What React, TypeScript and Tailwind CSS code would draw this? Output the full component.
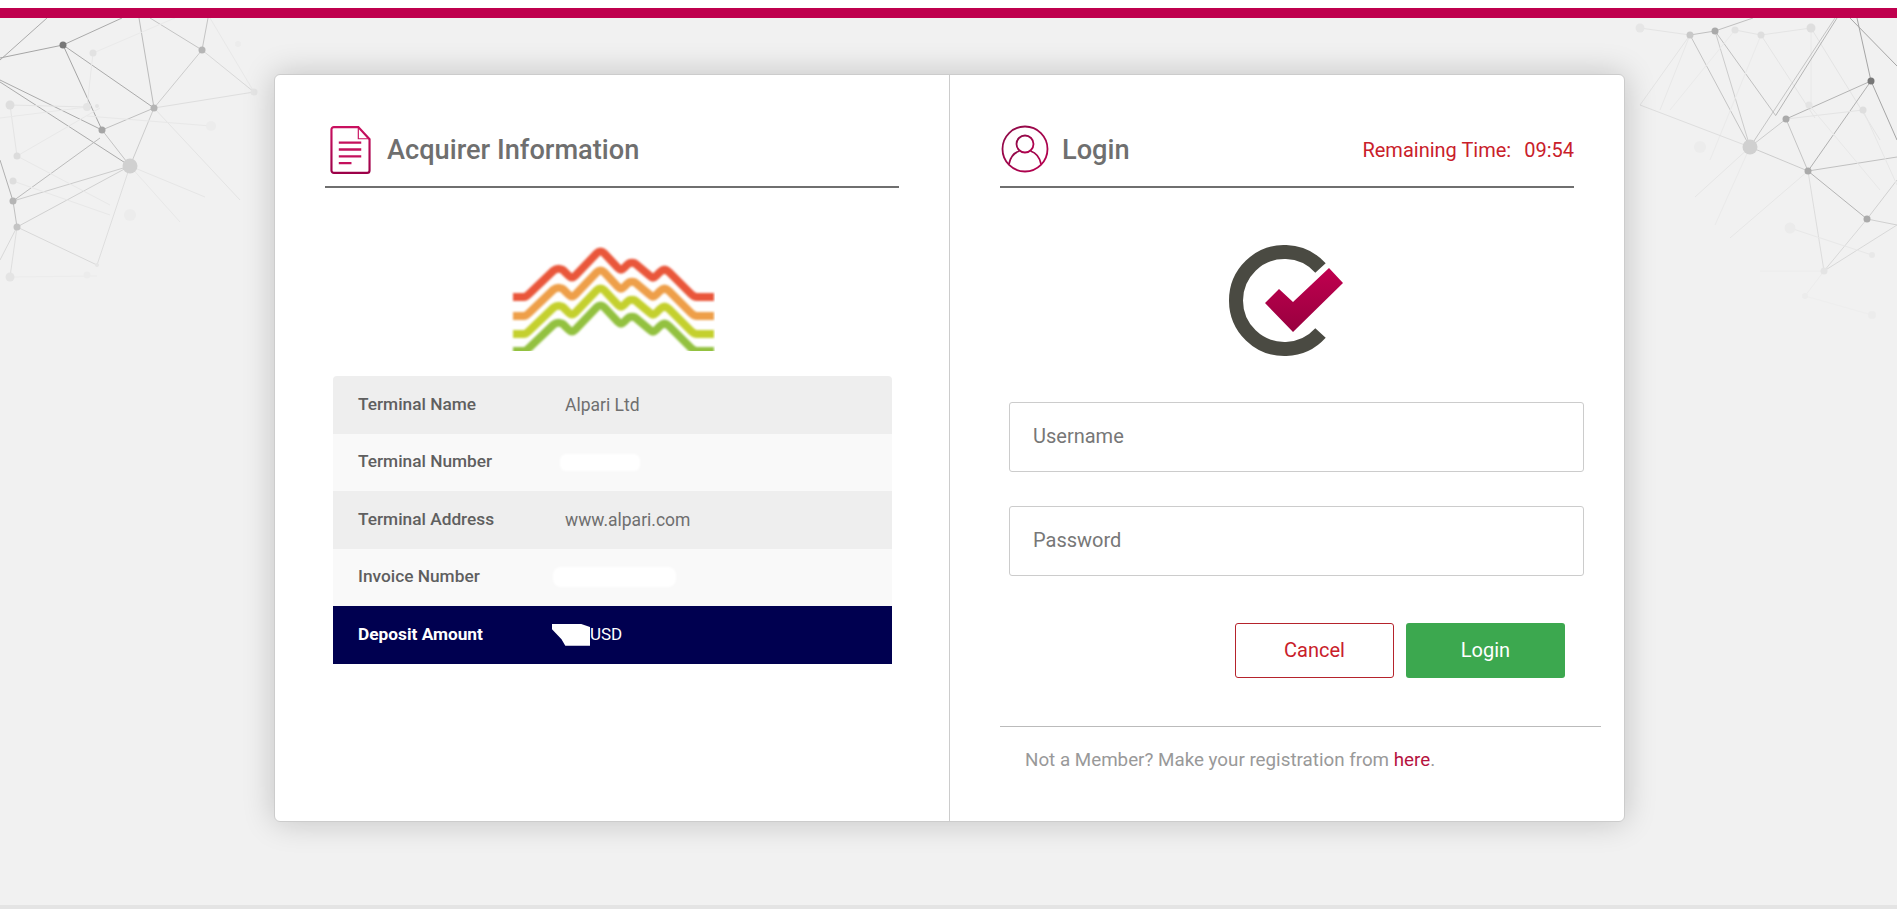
const leftNodes: [number, number, number, string][] = [
  [63, 45, 3.5, "#777"], [93, 53, 3.5, "#e2e2e2"], [202, 50, 3.5, "#b5b5b5"], [254, 92, 3.5, "#e6e6e6"],
  [238, 44, 3, "#ececec"], [154, 108, 3.5, "#b5b5b5"], [102, 130, 3.5, "#a5a5a5"], [10, 105, 4.5, "#dedede"],
  [87, 107, 4, "#e4e4e4"], [97, 106, 2, "#e4e4e4"], [211, 126, 5, "#ececec"], [130, 166, 7.5, "#d0d0d0"],
  [17, 156, 3.5, "#dcdcdc"], [13, 181, 3.5, "#dedede"], [13, 201, 3.5, "#b5b5b5"], [17, 227, 3.5, "#c4c4c4"],
  [130, 215, 6, "#ececec"], [10, 277, 4.5, "#e4e4e4"], [87, 275, 3.5, "#ececec"], [97, 265, 2, "#e6e6e6"],
];
const leftEdges: [number, number, number, number, string][] = [
  [0, 58, 63, 45, "#a5a5a5"], [0, 60, 47, 18, "#aaa"], [63, 45, 122, 18, "#aaa"], [63, 45, 102, 130, "#a5a5a5"],
  [63, 45, 154, 108, "#aaa"], [139, 18, 154, 108, "#bbb"], [150, 18, 202, 50, "#c4c4c4"], [202, 50, 154, 108, "#ccc"],
  [208, 18, 202, 50, "#c4c4c4"], [202, 50, 254, 92, "#d8d8d8"], [210, 18, 254, 92, "#e8e8e8"], [154, 108, 102, 130, "#c0c0c0"],
  [154, 108, 130, 166, "#ccc"], [154, 108, 254, 92, "#dedede"], [154, 108, 240, 200, "#e4e4e4"], [102, 130, 130, 166, "#c4c4c4"],
  [0, 80, 102, 130, "#aaa"], [0, 82, 130, 166, "#aaa"], [100, 138, 13, 201, "#bbb"], [130, 166, 13, 201, "#ccc"],
  [130, 166, 17, 227, "#d0d0d0"], [130, 166, 97, 265, "#dedede"], [130, 166, 205, 197, "#e6e6e6"], [130, 166, 180, 222, "#e8e8e8"],
  [13, 201, 17, 227, "#c0c0c0"], [0, 160, 13, 201, "#b0b0b0"], [17, 227, 97, 265, "#d8d8d8"], [17, 227, 10, 277, "#dedede"],
  [17, 227, 0, 260, "#d8d8d8"], [10, 105, 87, 107, "#e4e4e4"], [10, 105, 17, 156, "#e4e4e4"], [93, 53, 87, 107, "#e8e8e8"],
  [17, 156, 100, 108, "#e8e8e8"], [17, 156, 110, 205, "#e8e8e8"], [13, 181, 110, 215, "#e8e8e8"], [0, 118, 87, 107, "#e8e8e8"],
  [87, 116, 211, 126, "#e8e8e8"], [10, 277, 97, 276, "#ececec"], [93, 53, 175, 18, "#eaeaea"],
];
const rightNodes: [number, number, number, string][] = [
  [1640, 28, 4.5, "#e6e6e6"], [1690, 35, 3.5, "#c8c8c8"], [1715, 31, 3.5, "#aaa"], [1735, 30, 3.5, "#e2e2e2"],
  [1761, 35, 3.5, "#dedede"], [1811, 28, 4.5, "#dedede"], [1809, 105, 3.5, "#e4e4e4"], [1863, 110, 3.5, "#dedede"],
  [1786, 119, 3.5, "#aaa"], [1871, 81, 3.5, "#777"], [1808, 171, 3.5, "#aaa"], [1750, 147, 7.5, "#d0d0d0"],
  [1867, 219, 3.5, "#aaa"], [1700, 147, 6, "#ececec"], [1790, 228, 5.5, "#ebebeb"], [1824, 271, 3.5, "#e4e4e4"],
  [1872, 255, 3, "#e8e8e8"], [1805, 296, 3, "#ececec"], [1872, 315, 4, "#ececec"],
];
const rightEdges: [number, number, number, number, string][] = [
  [1640, 28, 1690, 35, "#e4e4e4"], [1690, 35, 1715, 31, "#c0c0c0"], [1715, 31, 1753, 18, "#c0c0c0"], [1735, 30, 1761, 35, "#e4e4e4"],
  [1761, 35, 1811, 28, "#e4e4e4"], [1811, 28, 1811, 110, "#e8e8e8"], [1690, 35, 1750, 147, "#c4c4c4"], [1715, 31, 1750, 147, "#ccc"],
  [1715, 31, 1776, 116, "#c0c0c0"], [1690, 35, 1640, 105, "#e4e4e4"], [1690, 35, 1660, 110, "#e8e8e8"], [1735, 30, 1670, 110, "#eaeaea"],
  [1761, 35, 1710, 160, "#eaeaea"], [1761, 35, 1815, 118, "#e4e4e4"], [1811, 28, 1880, 140, "#e4e4e4"], [1835, 18, 1750, 147, "#c4c4c4"],
  [1837, 18, 1776, 115, "#b4b4b4"], [1786, 119, 1871, 81, "#b4b4b4"], [1786, 119, 1750, 147, "#ccc"], [1786, 119, 1808, 171, "#c4c4c4"],
  [1871, 81, 1808, 171, "#b0b0b0"], [1857, 18, 1871, 81, "#a5a5a5"], [1850, 18, 1897, 66, "#a5a5a5"], [1871, 81, 1897, 140, "#a5a5a5"],
  [1808, 171, 1897, 157, "#c0c0c0"], [1808, 171, 1867, 219, "#b4b4b4"], [1750, 147, 1808, 171, "#ccc"], [1640, 105, 1750, 147, "#dedede"],
  [1750, 147, 1695, 197, "#e6e6e6"], [1750, 147, 1715, 225, "#eaeaea"], [1808, 171, 1730, 238, "#e6e6e6"], [1808, 171, 1824, 271, "#dcdcdc"],
  [1867, 219, 1824, 271, "#d8d8d8"], [1867, 219, 1897, 225, "#d0d0d0"], [1897, 180, 1867, 219, "#d0d0d0"], [1897, 225, 1824, 271, "#d8d8d8"],
  [1824, 271, 1760, 271, "#ececec"], [1863, 110, 1786, 119, "#e4e4e4"], [1863, 110, 1897, 185, "#e6e6e6"], [1809, 105, 1880, 190, "#e8e8e8"],
  [1790, 228, 1872, 255, "#e8e8e8"], [1824, 271, 1805, 296, "#ececec"], [1805, 296, 1872, 315, "#eeeeee"],
];

function Network({ nodes, edges, x }: { nodes: [number, number, number, string][]; edges: [number, number, number, number, string][]; x: number }) {
  return (
    <svg width="280" height="330" viewBox={`${x} 0 280 330`}>
      {edges.map(([x1, y1, x2, y2, c], i) => (
        <line key={i} x1={x1} y1={y1} x2={x2} y2={y2} stroke={c} strokeWidth="1" />
      ))}
      {nodes.map(([cx, cy, r, c], i) => (
        <circle key={i} cx={cx} cy={cy} r={r} fill={c} />
      ))}
    </svg>
  );
}

function DocIcon() {
  return (
    <svg width="41" height="50" viewBox="0 0 42 50" fill="none" className="shrink-0">
      <defs>
        <linearGradient id="doc" x1="0" y1="0" x2="0" y2="1">
          <stop offset="0" stopColor="#c9105f" />
          <stop offset="1" stopColor="#9c0048" />
        </linearGradient>
      </defs>
      <path d="M4 1.500H29L40.500 14V46a2.500 2.500 0 0 1-2.500 2.500H4A2.500 2.500 0 0 1 1.500 46V4A2.500 2.500 0 0 1 4 1.500Z" stroke="url(#doc)" strokeWidth="2.200" />
      <path d="M29 2V13.500H40" stroke="#c9105f" strokeWidth="1.200" />
      <path d="M9 17.500H32M9 24.500H32M9 31.500H32M9 38.500H22" stroke="#c4105c" strokeWidth="2.400" />
    </svg>
  );
}

function UserIcon() {
  return (
    <svg width="48" height="48" viewBox="0 0 48 48" fill="none" className="shrink-0">
      <defs>
        <linearGradient id="usr" x1="0" y1="0" x2="1" y2="1">
          <stop offset="0" stopColor="#8c0b48" />
          <stop offset="1" stopColor="#b8004f" />
        </linearGradient>
      </defs>
      <circle cx="24" cy="24" r="22.500" stroke="url(#usr)" strokeWidth="1.800" />
      <circle cx="24" cy="19" r="8.500" stroke="url(#usr)" strokeWidth="1.800" />
      <path d="M8 39C9.500 31.500 14 27.500 18.500 26M40 39C38.500 31.500 34 27.500 29.500 26" stroke="url(#usr)" strokeWidth="1.800" />
    </svg>
  );
}

function AlpariLogo() {
  const top = "M2 53L13 53C15 53 16 52 18 50L42 27C46 24 51 24 54 28L58 32C60 34 62 34 64 32L86 9C88 7 91 7 93 9L107 24C109 26 111 26 113 24L116 21C119 18 123 18 126 21L139 32C141 34 143 34 145 32L149 28C152 25 155 25 158 28L180 50C182 52 184 53 186 53L203 53";
  return (
    <svg width="204" height="107" viewBox="0 0 204 107" fill="none" className="mx-auto">
      <defs>
        <filter id="soft" x="-5%" y="-5%" width="110%" height="120%">
          <feGaussianBlur stdDeviation="1.300" />
        </filter>
      </defs>
      <g filter="url(#soft)" strokeWidth="8">
        <path d={top} stroke="#e9573a" />
        <path d={top} stroke="#ee9f48" transform="translate(0 19)" />
        <path d={top} stroke="#c4d02f" transform="translate(0 37)" />
        <path d={top} stroke="#93c141" transform="translate(0 54)" />
      </g>
    </svg>
  );
}

function CheckLogo() {
  return (
    <svg width="116" height="112" viewBox="1229 246 116 112" className="mx-auto block">
      <defs>
        <linearGradient id="chk" x1="0" y1="0" x2="0" y2="1">
          <stop offset="0" stopColor="#c0004f" />
          <stop offset="1" stopColor="#98003f" />
        </linearGradient>
      </defs>
      <path d="M1320.500 269A48.500 48.500 0 1 0 1320.500 334" fill="none" stroke="#4a4a42" strokeWidth="14" />
      <path d="M1265 304L1279 290L1293 303L1329 269L1343 284L1293 333Z" fill="url(#chk)" />
    </svg>
  );
}

const rows = [
  { label: "Terminal Name", value: "Alpari Ltd", bg: "bg-[#eeeeee]" },
  { label: "Terminal Number", blob: "w-[80px] h-[17px] -ml-[5px] rounded-[6px]", bg: "bg-[#f9f9f9]" },
  { label: "Terminal Address", value: "www.alpari.com", bg: "bg-[#eeeeee]" },
  { label: "Invoice Number", blob: "w-[123px] h-[20px] -ml-[12px] rounded-[8px]", bg: "bg-[#f9f9f9]" },
];

export default function App() {
  return (
    <div className="relative h-[909px] overflow-hidden bg-white pt-2 font-['Roboto',sans-serif]">
      <div className="relative z-10 h-[10px] bg-[#bf004e]" />
      <div className="h-[887px] bg-[#f1f1f1] pt-[56px]">
        <div className="absolute left-0 top-0">
          <Network nodes={leftNodes} edges={leftEdges} x={0} />
        </div>
        <div className="absolute right-0 top-0">
          <Network nodes={rightNodes} edges={rightEdges} x={1617} />
        </div>
        <div className="relative ml-[274px] flex h-[748px] w-[1351px] rounded-[6px] border border-[#cccccc] bg-white shadow-[0_0_32px_rgba(0,0,0,0.2)]">
          <section className="w-[675px] shrink-0 border-r border-[#cccccc] pl-[50px]">
            <header className="mt-[50px] flex h-[63px] w-[574px] items-start gap-[16px] border-b-2 border-[#6f6f6f] pl-[5px]">
              <DocIcon />
              <h2 className="mt-[9px] text-[27.200px] leading-[32px] font-medium text-[#6f6f6f]">Acquirer Information</h2>
            </header>
            <div className="mt-[56px] w-[574px] pl-[2px]">
              <AlpariLogo />
            </div>
            <div className="mt-[25px] ml-[8px] w-[559px] overflow-hidden rounded-t-[4px] text-[17.500px] text-[#6f6f6f]">
              {rows.map((r) => (
                <div key={r.label} className={`flex h-[57.500px] items-center pl-[25px] ${r.bg}`}>
                  <span className="w-[207px] text-[17.300px] font-medium text-[#5f5f5f]">{r.label}</span>
                  {r.blob ? <span className={`bg-white blur-[1px] ${r.blob}`} /> : <span>{r.value}</span>}
                </div>
              ))}
              <div className="flex h-[57.500px] items-center bg-[#000050] pl-[25px] text-white">
                <span className="w-[194px] text-[17.300px] font-bold">Deposit Amount</span>
                <span className="h-[22px] w-[38px] bg-white [clip-path:polygon(0_0,75%_0,100%_15%,100%_100%,35%_100%,25%_70%,0_25%)]" />
                <span className="text-[17px]">USD</span>
              </div>
            </div>
          </section>
          <section className="flex-1 pl-[50px]">
            <header className="mt-[50px] flex h-[63px] w-[574px] items-start border-b-2 border-[#6f6f6f] pl-[1px]">
              <UserIcon />
              <h2 className="ml-[13px] mt-[9px] text-[27.200px] leading-[32px] font-medium text-[#6f6f6f]">Login</h2>
              <div className="mt-[12px] ml-auto flex gap-[13px] text-[20px] leading-[26px] text-[#c9202a]">
                <span>Remaining Time:</span>
                <span>09:54</span>
              </div>
            </header>
            <div className="mt-[57px] w-[574px]">
              <CheckLogo />
            </div>
            <div className="mt-[45px] ml-[9px] flex w-[575px] flex-col gap-[34px]">
              <input placeholder="Username" className="h-[70px] rounded-[3px] border border-[#cccccc] bg-white px-[23px] pb-[3px] text-[20px] outline-none placeholder:text-[#777777]" />
              <input placeholder="Password" className="h-[70px] rounded-[3px] border border-[#cccccc] bg-white px-[23px] pb-[3px] text-[20px] outline-none placeholder:text-[#777777]" />
            </div>
            <div className="mt-[47px] ml-[235px] flex gap-3">
              <button className="h-[55px] w-[159px] rounded-[3px] border border-[#b5232c] bg-white pb-[1px] text-[20px] text-[#c9202a]">Cancel</button>
              <button className="h-[55px] w-[159px] rounded-[3px] bg-[#3ca84f] pb-[1px] text-[20px] text-white">Login</button>
            </div>
            <div className="mt-[48px] w-[601px] border-t border-[#bbbbbb] pl-[25px] pt-[20px] text-[18.800px] leading-[26px] text-[#999999]">
              Not a Member? Make your registration from <a className="text-[#b5123e]">here</a>.
            </div>
          </section>
        </div>
      </div>
      <div className="h-1 bg-[#e4e4e4]" />
    </div>
  );
}
